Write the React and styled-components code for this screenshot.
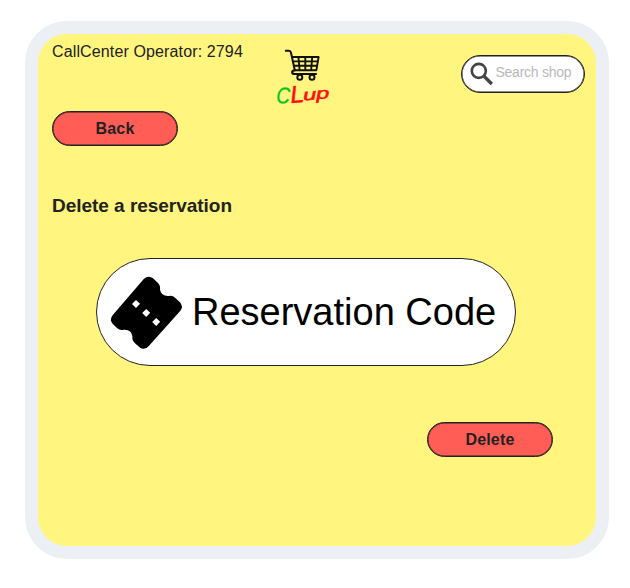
import React from "react";
import styled, { createGlobalStyle } from "styled-components";

const GlobalStyle = createGlobalStyle`
  * { box-sizing: border-box; }
  body { margin: 0; background: #fff; font-family: "Liberation Sans", Arial, sans-serif; color: #222; }
`;

const Page = styled.div`
  width: 630px;
  height: 588px;
  padding: 21px 0 0 25px;
`;

const Panel = styled.main`
  width: 584px;
  height: 538px;
  border: 13px solid #ecf0f5;
  border-radius: 42px;
  background: #fff57f;
`;

const Header = styled.header`
  display: flex;
  height: 77px;
  padding-left: 14px;
`;

const Operator = styled.div`
  width: 223px;
  padding-top: 8px;
  font-size: 16px;
  line-height: 19px;
  letter-spacing: 0.13px;
  white-space: nowrap;
`;

const Logo = styled.svg`
  width: 60px;
  height: 64px;
  margin-top: 12px;
  flex: none;
`;

const Search = styled.div`
  display: flex;
  width: 124px;
  height: 38px;
  margin: 21px 0 0 126px;
  padding-left: 8px;
  border: 1px solid #222;
  box-shadow: inset 0 0 0 0.5px #222;
  border-radius: 20px;
  background: #fff;
  color: #b9b9b9;
  font-size: 14px;
  line-height: 17px;
  letter-spacing: -0.25px;
  white-space: nowrap;
`;

const SearchIcon = styled.svg`
  width: 24px;
  height: 25px;
  margin-top: 6px;
  flex: none;
`;

const SearchText = styled.span`
  margin: 8px 0 0 1.5px;
`;

const Button = styled.button`
  display: block;
  width: 126px;
  height: 35px;
  margin: 0;
  padding: 0;
  border: 1px solid #222;
  box-shadow: inset 0 0 0 0.5px #222;
  border-radius: 18px;
  background: #ff5d55;
  color: #222;
  font: bold 16px/19px "Liberation Sans", Arial, sans-serif;
  letter-spacing: 0.2px;
`;

const Body = styled.section`
  display: flex;
  flex-direction: column;
  padding: 0 43px 0 14px;
`;

const Title = styled.h1`
  margin: 49px 0 0;
  font-size: 19px;
  line-height: 22px;
  font-weight: bold;
  letter-spacing: -0.03px;
`;

const CodeField = styled.div`
  display: flex;
  width: 420px;
  height: 108px;
  margin: 41px 0 56px 44px;
  padding-left: 8px;
  border: 1px solid #222;
  border-radius: 54px;
  background: #fff;
  color: #000;
  font-size: 38px;
  line-height: 44px;
  white-space: nowrap;
`;

const TicketIcon = styled.svg`
  width: 82px;
  height: 84px;
  margin-top: 11px;
  flex: none;
`;

const CodeText = styled.span`
  margin: 31px 0 0 5px;
`;

const Actions = styled.div`
  display: flex;
  justify-content: flex-end;
`;

export default function App() {
  return (
    <>
      <GlobalStyle />
      <Page>
        <Panel>
          <Header>
            <Operator>CallCenter Operator: 2794</Operator>
            <Logo viewBox="275 46 60 64">
              <g fill="none" stroke="#111" strokeLinecap="round" strokeLinejoin="round">
                <path strokeWidth="2" d="M285.8 50.8h3.2q1.5 0 2 2l3.6 16.5" />
                <path strokeWidth="2.2" d="M294.6 70.4q-2.4.3-2.4 1.9 0 1.7 2.2 1.7H316" />
                <path strokeWidth="1.9" d="M292.2 57H318.6L316.4 70.2H295M293.4 61.4H317.6M294.4 65.8H316.8M298.4 57l1.2 13M305.3 57v13M312.2 57l-1 12.5" />
                <circle cx="299.8" cy="77.3" r="2.5" strokeWidth="2" />
                <circle cx="312" cy="77.3" r="2.5" strokeWidth="2" />
              </g>
              <g fontFamily="Liberation Sans, Arial, sans-serif" fontStyle="italic">
                <text fontSize="23" fill="#00c61b" stroke="#00c61b" strokeWidth=".3" transform="translate(276 103) rotate(3) scale(.82 1)">C</text>
                <text fontSize="24" fill="#ff0d0d" stroke="#ff0d0d" strokeWidth=".5" transform="translate(291 103) rotate(-5) scale(1.02 1)">L<tspan dx="-1" dy="-1.5" fontSize="16" textLength="26" lengthAdjust="spacingAndGlyphs">up</tspan></text>
              </g>
            </Logo>
            <Search>
              <SearchIcon viewBox="0 0 24 25" fill="none" stroke="#444" strokeWidth="2.6">
                <circle cx="8.8" cy="8.9" r="7" />
                <path d="M13.8 14l8 8" strokeWidth="3.3" />
              </SearchIcon>
              <SearchText>Search shop</SearchText>
            </Search>
          </Header>
          <Body>
            <Button>Back</Button>
            <Title>Delete a reservation</Title>
            <CodeField>
              <TicketIcon viewBox="0 0 82 84">
                <path d="M39 8.8Q43.5 5 48 8.3L53 13Q55.6 15.6 55 19.5 56 26.5 64 26Q67.5 25 70 27.7L75 32.3Q78.7 36.5 75.2 41L43.8 76Q39.5 81 34.5 77.3L29.5 72.8Q26.8 70.2 27.4 66.3 26.5 59 18.5 59.7 15 60.8 12 58L7.8 54Q4 49.5 7.8 45Z" />
                <path fill="#fff" d="M31 30l4 3.7-4 4.2-4-3.9zM41.2 39l4 3.7-4 4.2-4-3.9zM51.2 48l4 3.7-4 4.2-4-3.9z" />
              </TicketIcon>
              <CodeText>Reservation Code</CodeText>
            </CodeField>
            <Actions>
              <Button>Delete</Button>
            </Actions>
          </Body>
        </Panel>
      </Page>
    </>
  );
}
